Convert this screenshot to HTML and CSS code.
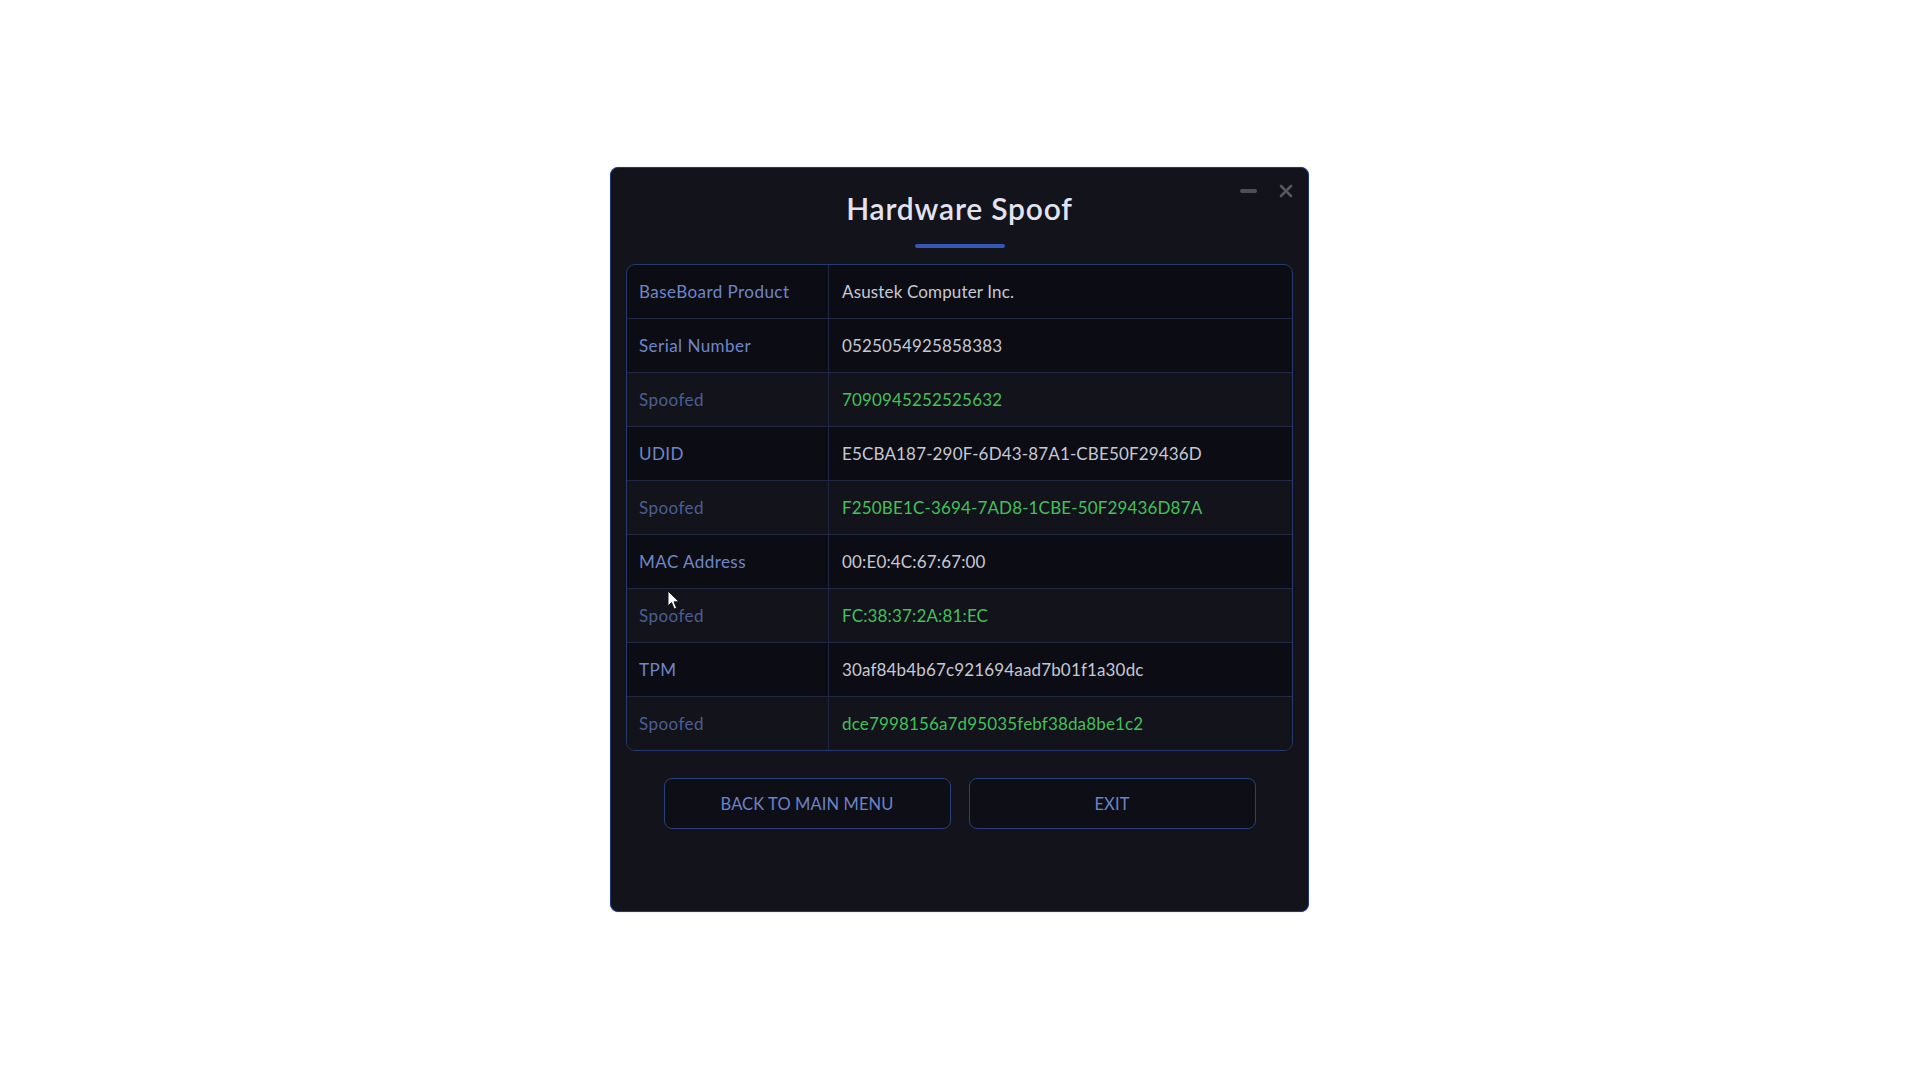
FILE: index.html
```html
<!DOCTYPE html>
<html lang="en">
<head>
<meta charset="utf-8">
<title>Hardware Spoof</title>
<link rel="stylesheet" href="styles.css">
</head>
<body>
<div class="window">
  <div class="controls">
    <span class="ctl-min"></span>
    <svg class="ctl-close" width="14" height="14" viewBox="0 0 14 14"><path d="M2 2 L12 12 M12 2 L2 12" stroke="#56565f" stroke-width="2.6" stroke-linecap="round"/></svg>
  </div>
  <header class="head">
    <h1 class="title">Hardware Spoof</h1>
    <div class="underline"></div>
  </header>
  <div class="table">
    <div class="row"><div class="key">BaseBoard Product</div><div class="val">Asustek Computer Inc.</div></div>
    <div class="row"><div class="key">Serial Number</div><div class="val">0525054925858383</div></div>
    <div class="row spoof"><div class="key">Spoofed</div><div class="val">7090945252525632</div></div>
    <div class="row"><div class="key">UDID</div><div class="val">E5CBA187-290F-6D43-87A1-CBE50F29436D</div></div>
    <div class="row spoof"><div class="key">Spoofed</div><div class="val">F250BE1C-3694-7AD8-1CBE-50F29436D87A</div></div>
    <div class="row"><div class="key">MAC Address</div><div class="val">00:E0:4C:67:67:00</div></div>
    <div class="row spoof"><div class="key">Spoofed</div><div class="val">FC:38:37:2A:81:EC</div></div>
    <div class="row"><div class="key">TPM</div><div class="val">30af84b4b67c921694aad7b01f1a30dc</div></div>
    <div class="row spoof"><div class="key">Spoofed</div><div class="val">dce7998156a7d95035febf38da8be1c2</div></div>
  </div>
  <div class="actions">
    <button class="btn">BACK TO MAIN MENU</button>
    <button class="btn">EXIT</button>
  </div>
</div>
<svg class="cursor" width="14" height="21" viewBox="0 0 14 21"><path d="M1 1 L1 16 L4.5 12.5 L7.2 19 L9.6 18 L7 11.8 L12 11.8 Z" fill="#ffffff" stroke="#1a1a1a" stroke-width="1" stroke-linejoin="round"/></svg>
</body>
</html>
```

FILE: styles.css
```css
html, body {
  margin: 0;
  padding: 0;
  background: #ffffff;
}
body {
  min-height: 1079px;
  display: flex;
  align-items: center;
  justify-content: center;
  font-family: "Lato", "Open Sans", sans-serif;
  position: relative;
}
.window {
  position: relative;
  box-sizing: border-box;
  width: 699px;
  height: 745px;
  background: #13131b;
  border: 1px solid #213a78;
  border-radius: 8px;
  padding: 0 15px;
  display: flex;
  flex-direction: column;
  box-shadow: 0 0 1px rgba(40, 70, 150, 0.6);
}
.controls {
  position: absolute;
  top: 16px;
  right: 15px;
  display: flex;
  align-items: center;
  gap: 22px;
}
.ctl-min {
  display: block;
  width: 17px;
  height: 4px;
  border-radius: 2px;
  background: #4e4e57;
}
.ctl-close { display: block; }
.head {
  padding-top: 22px;
  display: flex;
  flex-direction: column;
  align-items: center;
}
.title {
  margin: 0;
  font-size: 30px;
  line-height: 36px;
  font-weight: 600;
  color: #e3e3f0;
  letter-spacing: 0.8px;
}
.underline {
  margin-top: 18px;
  width: 90px;
  height: 4px;
  border-radius: 2px;
  background: #3556b9;
}
.table {
  margin-top: 16px;
  border: 1px solid #27396e;
  border-radius: 9px;
  overflow: hidden;
  background: #0c0d14;
}
.row {
  display: flex;
  height: 54px;
  box-sizing: border-box;
  border-bottom: 1px solid #222843;
  font-size: 17px;
}
.row:last-child { border-bottom: none; height: 53px; }
.row.spoof { background: #12131b; }
.key {
  box-sizing: border-box;
  width: 202px;
  flex: none;
  padding-left: 12px;
  border-right: 1px solid #222843;
  display: flex;
  align-items: center;
  color: #6f86c8;
  letter-spacing: 0.45px;
}
.row.spoof .key { color: #4b5f92; }
.val {
  padding-left: 13px;
  display: flex;
  align-items: center;
  color: #c6c8d3;
  letter-spacing: 0.15px;
}
.row.spoof .val { color: #44c05a; }
.actions {
  margin-top: 27px;
  display: flex;
  justify-content: center;
  gap: 18px;
}
.btn {
  width: 287px;
  height: 51px;
  box-sizing: border-box;
  background: #0d0e16;
  border: 1px solid #2b3f7a;
  border-radius: 8px;
  color: #6c83c6;
  font-family: "Lato", "Open Sans", sans-serif;
  font-size: 16.5px;
  letter-spacing: 0.1px;
  padding: 0;
}
.cursor {
  position: absolute;
  left: 667px;
  top: 590px;
}
```
